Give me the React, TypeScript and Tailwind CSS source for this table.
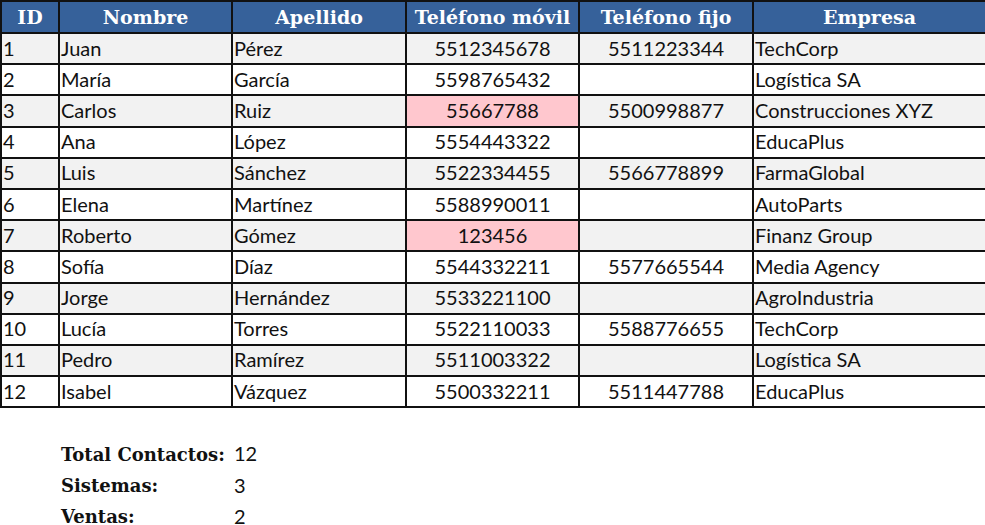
const rows = [
  ["1", "Juan", "Pérez", "5512345678", "5511223344", "TechCorp"],
  ["2", "María", "García", "5598765432", "", "Logística SA"],
  ["3", "Carlos", "Ruiz", "55667788", "5500998877", "Construcciones XYZ"],
  ["4", "Ana", "López", "5554443322", "", "EducaPlus"],
  ["5", "Luis", "Sánchez", "5522334455", "5566778899", "FarmaGlobal"],
  ["6", "Elena", "Martínez", "5588990011", "", "AutoParts"],
  ["7", "Roberto", "Gómez", "123456", "", "Finanz Group"],
  ["8", "Sofía", "Díaz", "5544332211", "5577665544", "Media Agency"],
  ["9", "Jorge", "Hernández", "5533221100", "", "AgroIndustria"],
  ["10", "Lucía", "Torres", "5522110033", "5588776655", "TechCorp"],
  ["11", "Pedro", "Ramírez", "5511003322", "", "Logística SA"],
  ["12", "Isabel", "Vázquez", "5500332211", "5511447788", "EducaPlus"],
];

const headers = ["ID", "Nombre", "Apellido", "Teléfono móvil", "Teléfono fijo", "Empresa"];
const widths = [58, 173, 174, 173, 174, 233];

const serif = "font-['DejaVu_Serif',serif] font-bold";
const sans = "font-['Lato',sans-serif]";

export default function App() {
  return (
    <div className="w-[985px] h-[525px] overflow-hidden bg-white text-[#111]">
      <table className="table-fixed border-collapse w-[985px]">
        <colgroup>
          {widths.map((w, i) => (
            <col key={i} style={{ width: w }} />
          ))}
        </colgroup>
        <thead>
          <tr className="h-[32px]">
            {headers.map((h) => (
              <th
                key={h}
                className={`${serif} border-2 border-[#111] bg-[#36619a] text-white text-[19px] leading-none text-center p-0`}
              >
                {h}
              </th>
            ))}
          </tr>
        </thead>
        <tbody>
          {rows.map((r, i) => (
            <tr key={r[0]} className={`h-[31.2px] ${i % 2 === 0 ? "bg-[#f2f2f2]" : "bg-white"}`}>
              {r.map((c, j) => {
                const phone = j === 3 || j === 4;
                const bad = j === 3 && c.length !== 10;
                return (
                  <td
                    key={j}
                    className={`${sans} border-2 border-[#111] text-[20px] leading-none pt-0 pb-[2px] px-[1px] whitespace-nowrap ${
                      phone ? "text-center" : "text-left"
                    } ${bad ? "bg-[#ffc7ce]" : ""}`}
                  >
                    {c}
                  </td>
                );
              })}
            </tr>
          ))}
        </tbody>
      </table>

      <div className="mt-[31px] flex flex-col">
        {[
          ["Total Contactos:", "12"],
          ["Sistemas:", "3"],
          ["Ventas:", "2"],
        ].map(([label, value]) => (
          <div key={label} className="flex h-[31.2px] items-center">
            <div className="w-[58px]" />
            <div className={`${serif} w-[173px] pl-[3px] text-[18px] leading-none`}>{label}</div>
            <div className={`${sans} pl-[3px] pb-[3px] text-[20px] leading-none`}>{value}</div>
          </div>
        ))}
      </div>
    </div>
  );
}
